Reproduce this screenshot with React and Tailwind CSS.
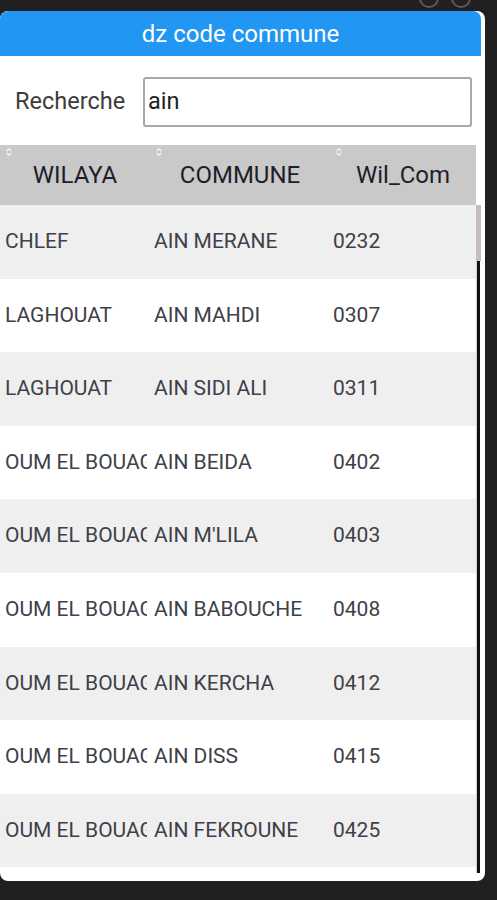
import { ChevronsUpDown } from 'lucide-react'

const rows = [
  ['CHLEF', 'AIN MERANE', '0232'],
  ['LAGHOUAT', 'AIN MAHDI', '0307'],
  ['LAGHOUAT', 'AIN SIDI ALI', '0311'],
  ['OUM EL BOUAGHI', 'AIN BEIDA', '0402'],
  ['OUM EL BOUAGHI', "AIN M'LILA", '0403'],
  ['OUM EL BOUAGHI', 'AIN BABOUCHE', '0408'],
  ['OUM EL BOUAGHI', 'AIN KERCHA', '0412'],
  ['OUM EL BOUAGHI', 'AIN DISS', '0415'],
  ['OUM EL BOUAGHI', 'AIN FEKROUNE', '0425'],
]

function SortMark() {
  return (
    <span className="absolute left-[4px] top-[2px] text-white/80">
      <ChevronsUpDown className="h-[10px] w-[10px]" strokeWidth={3} />
    </span>
  )
}

export default function App() {
  return (
    <div className="relative h-[900px] w-[497px] overflow-hidden bg-[#211f1f] font-['Roboto',sans-serif]">
      <div className="absolute right-[26px] top-[-12px] h-[20px] w-[20px] rounded-full border-2 border-[#5a5a5a]" />
      <div className="absolute right-[58px] top-[-12px] h-[20px] w-[20px] rounded-full border-2 border-[#5a5a5a]" />

      <div className="ml-0 mt-[11px] flex h-[870px] w-[485px] flex-col overflow-hidden rounded-[8px] bg-white">
        <div className="mr-[4px] flex h-[45px] items-center justify-center rounded-t-[8px] bg-[#2196f3] text-[24px] text-white">
          dz code commune
        </div>

        <div className="flex h-[89px] items-center pr-[13px] pt-[3px]">
          <span className="w-[143px] pl-[15px] text-[23.5px] text-[#3c3c3c]">Recherche</span>
          <div className="flex h-[50px] flex-1 items-center rounded-[3px] border-2 border-[#a8a8a8] px-[3px] text-[23.5px] text-[#222]">
            ain
          </div>
        </div>

        <div className="flex flex-1">
          <div className="w-[476px]">
            <div className="flex h-[60px] bg-[#c9c9c9] text-[24px] text-[#1e1e2a]">
              <div className="relative flex w-[150px] items-center justify-center">
                <SortMark />
                WILAYA
              </div>
              <div className="relative flex w-[180px] items-center justify-center">
                <SortMark />
                COMMUNE
              </div>
              <div className="relative flex flex-1 items-center justify-center">
                <SortMark />
                Wil_Com
              </div>
            </div>
            {rows.map((r, i) => (
              <div
                key={i}
                className={`flex h-[73.6px] items-center text-[21px] text-[#404048] ${i % 2 === 0 ? 'bg-[#efefef]' : 'bg-white'}`}
              >
                <div className="mr-[3px] w-[147px] overflow-hidden whitespace-nowrap pl-[5px]">{r[0]}</div>
                <div className="w-[180px] whitespace-nowrap pl-[4px]">{r[1]}</div>
                <div className="flex-1 pl-[3px]">{r[2]}</div>
              </div>
            ))}
          </div>
          <div className="flex w-[9px] flex-col">
            <div className="h-[60px] bg-white" />
            <div className="h-[56px] w-[5px] bg-[#c4bcc0]" />
            <div className="flex flex-1 pb-[8px]">
              <div className="w-[1px] bg-[#d0d0d0]" />
              <div className="w-[3px] bg-[#111]" />
            </div>
          </div>
        </div>
      </div>
    </div>
  )
}
